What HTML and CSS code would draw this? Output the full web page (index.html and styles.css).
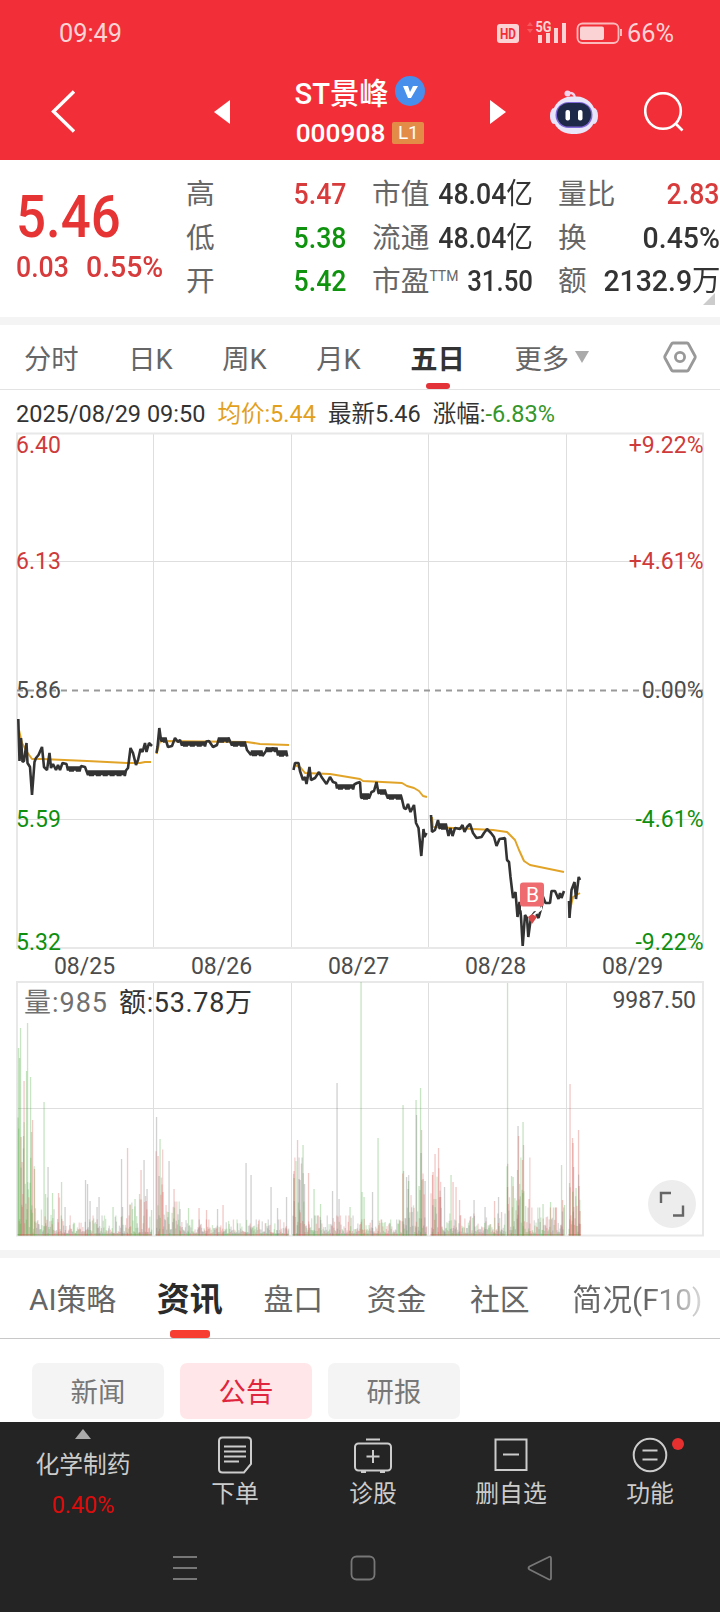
FILE: index.html
```
<!DOCTYPE html>
<html lang="zh-CN">
<head>
  <meta charset="UTF-8" />
  <meta name="viewport" content="width=device-width, initial-scale=1.0"/>
  <title>ST景峰 000908</title>
  <link rel="stylesheet" href="styles.css">
</head>
<body>
  <header class="header">
    <div class="status-bar">
      <span class="time">09:49</span>
      <svg class="signal" width="126" height="28" viewBox="0 0 126 28">
        <rect x="0" y="5" width="22" height="19" rx="3" fill="#fcd3d5"/>
        <text class="hd" x="3" y="20" textLength="16" lengthAdjust="spacingAndGlyphs">HD</text>
        <path d="M30 7l3-4 3 4zM30 10l3 4 3-4z" fill="#f5575d"/>
        <text class="net" x="38.500" y="12.500" textLength="16" lengthAdjust="spacingAndGlyphs">5G</text>
        <path d="M41 16h4v8h-4zM49 14h4v10h-4zM57 9h4v15h-4zM65 4h4v20h-4z" fill="#fcd3d5"/>
        <rect x="80.500" y="4.500" width="41" height="19.500" rx="5" fill="none" stroke="#fcb9bc" stroke-width="1.8"/>
        <rect x="83" y="7.500" width="24" height="13.500" rx="2" fill="#fcd3d5"/>
        <path d="M124 10v7" stroke="#fcb9bc" stroke-width="2"/>
      </svg>
      <span class="battery">66%</span>
    </div>
    <div class="title-bar">
      <svg class="back" width="26" height="44" viewBox="0 0 26 44"><path d="M24 1.500L3.500 21.500l20.500 20" fill="none" stroke="#fff" stroke-width="3.400"/></svg>
      <svg class="prev" width="16" height="24" viewBox="0 0 16 24"><path d="M16 0v24L0 12z" fill="#fff"/></svg>
      <div class="stock">
        <div class="stock-name">ST景峰
          <svg width="30" height="30" viewBox="0 0 30 30"><circle cx="15" cy="15" r="15" fill="#478feb"/><path d="M8 10h5l2 6 3-6h5l-7 12h-3z" fill="#fff"/></svg>
        </div>
        <div class="stock-code">000908 <span class="level">L1</span></div>
      </div>
      <svg class="next" width="16" height="24" viewBox="0 0 16 24"><path d="M0 0v24l16-12z" fill="#fff"/></svg>
      <svg class="robot" width="48" height="44" viewBox="0 0 48 44">
        <path d="M18 3q7-1 7 6" fill="none" stroke="#f3d4ee" stroke-width="2.500"/>
        <circle cx="17.500" cy="3.500" r="3" fill="#f3d4ee"/>
        <ellipse cx="4" cy="26" rx="4" ry="8" fill="#e4e3fb"/>
        <ellipse cx="44" cy="26" rx="4" ry="8" fill="#e4e3fb"/>
        <rect x="2.500" y="6.500" width="43" height="37.500" rx="19" fill="#e9e6fa"/>
        <rect x="5.500" y="12" width="37" height="26" rx="13" fill="#8069d8"/>
        <rect x="7" y="13" width="34" height="23.500" rx="11.500" fill="#1e2848"/>
        <rect x="15.500" y="20" width="4.500" height="10.500" rx="2" fill="#fff"/>
        <rect x="28" y="20" width="4.500" height="10.500" rx="2" fill="#fff"/>
      </svg>
      <svg class="search" width="40" height="40" viewBox="0 0 40 40" fill="none" stroke="#fff" stroke-width="2.600"><circle cx="19" cy="19" r="17.800"/><path d="M31 31l7.500 7.500"/></svg>
    </div>
  </header>

  <section class="quote">
    <div class="price">
      <div class="last"><span class="num">5.46</span></div>
      <div class="change"><span class="num">0.03</span><span class="num percent">0.55%</span></div>
    </div>
    <dl class="stats">
      <div class="stat"><dt>高</dt><dd class="up">5.47</dd></div>
      <div class="stat"><dt>市值</dt><dd>48.04<i>亿</i></dd></div>
      <div class="stat"><dt>量比</dt><dd class="up">2.83</dd></div>
      <div class="stat"><dt>低</dt><dd class="down">5.38</dd></div>
      <div class="stat"><dt>流通</dt><dd>48.04<i>亿</i></dd></div>
      <div class="stat"><dt>换</dt><dd class="wide">0.45%</dd></div>
      <div class="stat"><dt>开</dt><dd class="down">5.42</dd></div>
      <div class="stat"><dt>市盈<sup>TTM</sup></dt><dd class="narrow">31.50</dd></div>
      <div class="stat"><dt>额</dt><dd class="wide">2132.9<i>万</i></dd></div>
    </dl>
    <div class="corner"></div>
  </section>

  <nav class="period-tabs">
    <span>分时</span>
    <span>日K</span>
    <span>周K</span>
    <span>月K</span>
    <span class="active">五日</span>
    <span class="more">更多</span>
    <svg class="gear" width="34" height="34" viewBox="0 0 34 34" fill="none" stroke="#999" stroke-width="2.800"><path d="M10 3h14q1 0 1.500 1l6.500 12q.5 1 0 2l-6.500 12q-.5 1-1.500 1H10q-1 0-1.500-1L2 18q-.5-1 0-2L8.500 4q.5-1 1.500-1z"/><circle cx="17" cy="17" r="4.600"/></svg>
  </nav>

  <div class="legend">
    <span>2025/08/29 09:50</span>
    <span class="avg">均价:5.44</span>
    <span>最新5.46</span>
    <span>涨幅:<b>-6.83%</b></span>
  </div>

  <svg class="chart" width="720" height="818" viewBox="0 432 720 818">
    <g class="grid">
      <path d="M153.500 433v515M291.500 433v515M428.500 433v515M566.500 433v515M17 561.500h686M17 819.500h686"/>
      <path d="M153.500 982v254M291.500 982v254M428.500 982v254M566.500 982v254M17 1108.500h686"/>
    </g>
    <g class="frame">
      <rect x="17" y="433.500" width="686" height="514.500"/>
      <rect x="17" y="982" width="686" height="253.500"/>
    </g>
    <path class="zero" d="M17 690.500h686"/>
    <g id="volume"></g>
    <g id="lines"></g>
    <g class="marker">
      <path class="tip" d="M521 906l11 9 10-9v4l-7 5h-6l-8-5z"/>
      <path d="M528 917l4-3 5 3-5 7z" fill="#d84848"/>
      <rect x="520" y="882.500" width="24" height="24" rx="3"/>
      <text x="532.500" y="902">B</text>
    </g>
    <g class="axis">
      <text class="up" x="16" y="453">6.40</text>
      <text class="up" x="16" y="569">6.13</text>
      <text x="16" y="698">5.86</text>
      <text class="down" x="16" y="827">5.59</text>
      <text class="down" x="16" y="950">5.32</text>
      <g text-anchor="end">
        <text class="up" x="703.500" y="453">+9.22%</text>
        <text class="up" x="703.500" y="569">+4.61%</text>
        <text x="703.500" y="698">0.00%</text>
        <text class="down" x="703.500" y="827">-4.61%</text>
        <text class="down" x="703.500" y="950">-9.22%</text>
        <text x="696" y="1008">9987.50</text>
      </g>
      <g text-anchor="middle">
        <text x="84.500" y="974">08/25</text>
        <text x="221.500" y="974">08/26</text>
        <text x="358.500" y="974">08/27</text>
        <text x="495.500" y="974">08/28</text>
        <text x="632.500" y="974">08/29</text>
      </g>
    </g>
    <text class="vol-text muted" x="24" y="1012" textLength="83">量:985</text>
    <text class="vol-text" x="119" y="1012" textLength="133">额:53.78万</text>
    <g class="expand">
      <circle cx="672" cy="1204" r="24"/>
      <path d="M661 1203v-10h10M673 1215.500h10v-10"/>
    </g>
  </svg>

  <nav class="info-tabs">
    <span>AI策略</span>
    <span class="active">资讯</span>
    <span>盘口</span>
    <span>资金</span>
    <span>社区</span>
    <span class="fade">简况(F10)</span>
  </nav>

  <div class="pills">
    <span class="pill">新闻</span>
    <span class="pill selected">公告</span>
    <span class="pill">研报</span>
  </div>

  <footer class="footer">
    <div class="toolbar">
      <div class="sector">
        <div class="arrow"></div>
        <div class="sector-name">化学制药</div>
        <div class="sector-change">0.40%</div>
      </div>
      <div class="tool">
        <svg width="40" height="40" viewBox="0 0 40 40"><path d="M7.500 2.500h25q3.500 0 3.500 3.500v23l-7 8.500H7.500Q4 37.500 4 34V6q0-3.500 3.500-3.500zM9 11.500h22M9 16.500h22M9 21.500h22M9 26.500h15"/></svg>
        下单
      </div>
      <div class="tool">
        <svg width="40" height="40" viewBox="0 0 40 40"><rect x="2" y="8.500" width="36" height="27" rx="3.500"/><path d="M13 4.500h14M20 15v13M13.500 21.500h13M8 37h5M27 37h5"/></svg>
        诊股
      </div>
      <div class="tool">
        <svg width="40" height="40" viewBox="0 0 40 40"><path d="M4.500 4.500h31v30.500h-31zM12 19.500h16"/></svg>
        删自选
      </div>
      <div class="tool dot">
        <svg width="40" height="40" viewBox="0 0 40 40"><circle cx="20" cy="20" r="16.300"/><path d="M12.500 15.500h15M12.500 24.500h15"/></svg>
        功能
      </div>
    </div>
    <div class="system-nav">
      <svg width="26" height="26" viewBox="0 0 26 26"><path d="M1 2h24M1 13h24M1 24h24"/></svg>
      <svg width="26" height="26" viewBox="0 0 26 26"><rect x="1.500" y="1.500" width="23" height="23" rx="5"/></svg>
      <svg width="26" height="26" viewBox="0 0 26 26"><path d="M22 2L2.500 11.500q-2 1.500 0 3L22 24.500q2 .5 2-1.500V3.500Q24 1 22 2z"/></svg>
    </div>
  </footer>

  <script src="chart.js"></script>
</body>
</html>
```
FILE: styles.css
```
* {
  box-sizing: border-box;
}

body {
  margin: 0;
  width: 720px;
  height: 1612px;
  overflow: hidden;
  background: #fff;
  color: #333;
  font-family: Roboto, "Noto Sans CJK SC", sans-serif;
}

svg {
  display: block;
}

.up { color: #d83b3b; fill: #cf3a3a; }
.down { color: #0f930f; fill: #0f8f0f; }

/* Header */
.header {
  height: 160px;
  background: #f22f38;
  color: #fff;
}

.status-bar {
  height: 64px;
  padding: 2px 46px 0 59px;
  display: flex;
  align-items: center;
  font-size: 25.3px;
  color: #fcd3d5;
}

.signal {
  margin-left: auto;
  margin-right: 4px;
}

.hd, .net {
  font-size: 15px;
  font-weight: bold;
  fill: #f22f38;
}

.net { fill: #fcd3d5; font-size: 14px; }

.title-bar {
  height: 96px;
  padding-left: 50px;
  display: flex;
  align-items: center;
}

.prev { margin-left: 138px; }
.robot { margin-left: 44px; }
.search { margin-left: 46px; }

.stock {
  width: 260px;
}

.stock-name,
.stock-code {
  display: flex;
  align-items: center;
  justify-content: center;
  height: 41px;
  font-size: 29.2px;
  font-weight: 500;
  gap: 7px;
}

.stock-code {
  font-size: 26.3px;
  height: 43px;
}

.level {
  width: 32px;
  height: 22px;
  border-radius: 2px;
  background: #e38c48;
  font-size: 19px;
  font-weight: 400;
  line-height: 22px;
  text-align: center;
}

/* Quote */
.quote {
  position: relative;
  height: 165px;
  border-bottom: 8px solid #f4f4f4;
  display: flex;
}

.price {
  width: 186px;
  padding: 23px 0 0 16px;
  color: #e63434;
}

.num {
  display: inline-block;
  transform: scaleX(0.88);
  transform-origin: left;
}

.last {
  height: 66px;
  line-height: 68px;
  font-size: 60px;
  font-weight: 500;
}

.change {
  display: flex;
  gap: 12px;
  line-height: 36px;
  font-size: 29px;
  color: #d83b3b;
  font-weight: 500;
}

.change .num { transform: scaleX(0.92); }
.change .percent { transform: scaleX(0.98); }

.stats {
  width: 534px;
  margin: 0;
  padding-top: 12px;
  display: grid;
  grid-template-columns: 161px 161px 162px;
  grid-auto-rows: 43.5px;
  column-gap: 25px;
}

.stat {
  display: flex;
  justify-content: space-between;
  line-height: 44px;
  white-space: nowrap;
}

.stat dt {
  font-size: 28.7px;
  color: #666;
}

.stat dd {
  margin: 0;
  font-size: 29px;
  font-weight: 500;
  transform: scaleX(0.92);
  transform-origin: right;
}

.stat .wide { transform: scaleX(0.98); }
.stat .narrow { transform: scaleX(0.89); }

.stat i {
  font-style: normal;
  font-weight: 400;
}

.stat sup {
  font-size: 14px;
  line-height: 1;
  vertical-align: 10px;
}

.corner {
  position: absolute;
  right: 5px;
  bottom: 12px;
  border-left: 12px solid transparent;
  border-bottom: 12px solid #ccc;
}

/* Period tabs */
.period-tabs {
  height: 65px;
  padding-left: 24px;
  border-bottom: 1px solid #e3e3e3;
  display: flex;
  align-items: center;
  gap: 49.6px;
  font-size: 27.3px;
  color: #666;
}

.period-tabs span {
  position: relative;
  white-space: nowrap;
}

.period-tabs .active {
  color: #333;
  font-weight: bold;
}

.active::after {
  content: "";
  position: absolute;
  left: 50%;
  width: 24px;
  height: 6px;
  margin-left: -12px;
  bottom: -12px;
  border-radius: 3px;
  background: #e33338;
}

.period-tabs .more {
  display: flex;
  align-items: center;
  gap: 6px;
}

.more::after {
  content: "";
  border: 7.5px solid transparent;
  border-top: 12px solid #aaa;
  border-bottom: 0;
}

.gear {
  margin-left: auto;
  margin-right: 23px;
}

.legend {
  height: 42px;
  padding: 6px 0 0 16px;
  display: flex;
  gap: 12px;
  font-size: 23.5px;
  line-height: 36px;
  white-space: nowrap;
}

.legend .avg { color: #e2a01c; }
.legend b { font-weight: 400; color: #35962a; }

/* Chart */
.grid path {
  fill: none;
  stroke: #dedede;
}

.frame rect {
  fill: none;
  stroke: #e8e8e8;
  stroke-width: 2;
}

.zero {
  stroke: #999;
  stroke-width: 1.8;
  stroke-dasharray: 6 5;
}

.axis text {
  font-size: 23px;
}

.axis text:not(.up):not(.down) {
  fill: #4c4c4c;
}

.price-line,
.avg-line {
  fill: none;
  stroke: #333;
  stroke-width: 2.6;
}

.avg-line {
  stroke: #e2a428;
  stroke-width: 2;
}

.marker rect { fill: #ee6c70; }
.marker .tip { fill: #fff; }
.marker text {
  font-size: 21px;
  text-anchor: middle;
  fill: #fff;
}

.vol-text {
  font-size: 27px;
  fill: #333;
}

.vol-text.muted { fill: #707070; }

.expand circle { fill: #ededed; }
.expand path {
  fill: none;
  stroke: #666;
  stroke-width: 2.4;
}

/* Info tabs */
.info-tabs {
  height: 89px;
  padding: 0 0 3px 29px;
  border-top: 8px solid #f4f4f4;
  border-bottom: 1px solid #c8c8c8;
  display: flex;
  align-items: center;
  gap: 43.7px;
  font-size: 29.8px;
  color: #666;
  white-space: nowrap;
}

.info-tabs .active {
  position: relative;
  margin: 0 -3px;
  font-size: 33px;
  font-weight: bold;
  color: #2b2b2b;
}

.info-tabs .active::after {
  width: 40px;
  height: 8px;
  margin-left: -20px;
  bottom: -17px;
  background: #f73d31;
}

.fade {
  margin-left: -1px;
  background: linear-gradient(90deg, #666 60%, #ddd 100%);
  -webkit-background-clip: text;
  background-clip: text;
  color: transparent;
}

.pills {
  height: 83px;
  padding: 24px 32px 0;
  display: flex;
  gap: 16px;
}

.pill {
  width: 132px;
  height: 56px;
  border-radius: 7px;
  background: #f4f4f4;
  color: #777;
  font-size: 27.4px;
  line-height: 61px;
  text-align: center;
}

.pill.selected {
  background: #ffe7e9;
  color: #e0263e;
}

/* Footer */
.footer {
  height: 190px;
  background: #242424;
  color: #ccc;
}

.toolbar {
  height: 120px;
  display: grid;
  grid-template-columns: 166px 138px 138px 138px 140px;
  font-size: 23.8px;
  text-align: center;
}

.arrow {
  width: 0;
  margin: 7px auto 0;
  border: 8.5px solid transparent;
  border-top: 0;
  border-bottom: 10px solid #aaa;
}

.sector-name {
  height: 42px;
  line-height: 52px;
}

.sector-change {
  line-height: 49px;
  font-size: 23.4px;
  color: #dc0c0c;
}

.tool {
  position: relative;
  line-height: 39px;
}

.tool svg {
  margin: 13px auto 0;
  fill: none;
  stroke: #ccc;
  stroke-width: 2;
}

.dot::after {
  content: "";
  position: absolute;
  left: 92px;
  top: 16px;
  width: 12px;
  height: 12px;
  border-radius: 50%;
  background: #e63030;
}

.system-nav {
  padding: 13px 167px 0 172px;
  display: flex;
  justify-content: space-between;
}

.system-nav svg {
  fill: none;
  stroke: #777;
  stroke-width: 1.8;
}
```
FILE: chart.js
```
const NS = 'http://www.w3.org/2000/svg';
const BASE = 1235.5;

// flat stretch where the price flips between two ticks: x0, x1, top, bottom
function wiggle(x0, x1, top, bottom) {
  const points = [];
  for (let x = x0, i = 0; x <= x1; x += 1.15, i++) {
    points.push([x, i % 2 ? top - 0.5 : bottom + (i % 3 ? 0.5 : -0.5)]);
  }
  return points;
}

const prices = [
  [
    [18.3, 719], [19.5, 761], [21, 738], [22.5, 762], [24, 761], [26.5, 743], [27.5, 763], [30, 767], [32, 795],
    [34.5, 762], [36, 758], [38.5, 755], [42, 747], [44, 767], [47, 770], [49.5, 753], [51, 768], [53, 764],
    [56, 770], [58, 765], [60, 770], [62.5, 763], [66.5, 764], ...wiggle(68, 80, 767, 771), [81, 766], [85, 767],
    ...wiggle(88, 127, 771, 775.5), [128, 768], [130.5, 748], [133, 753], [136, 765], [138, 760], [140.5, 749],
    [142.5, 752], [145, 743], [146.5, 752], [149, 743], [152, 746]
  ],
  [
    [156.5, 753], [157.5, 747], [159.3, 728], [161, 740], ...wiggle(162, 167, 738, 742), [168, 747], [172, 746],
    [175, 738], [178, 742], [180, 740], ...wiggle(182, 207, 742, 746), [209, 741], [213, 747], [217, 745],
    ...wiggle(218, 229, 738, 742), ...wiggle(232, 246, 742, 746), [247, 750], ...wiggle(251, 263, 751, 755.5),
    ...wiggle(266, 277, 748, 751.5), ...wiggle(278, 288, 751, 756)
  ],
  [
    [293.5, 770], [295, 763], [298.5, 763], [300, 771], [303, 780], [305, 777], [306.5, 784], [309.5, 767], [311, 780],
    [315, 778], [319, 772], [321.5, 777], [326.5, 784], [330, 777], [333, 782], [336, 783],
    ...wiggle(337, 355, 785, 789), [357, 783], [360, 782], [361, 797], ...wiggle(362, 370, 794, 799), [371.5, 792],
    [374, 791], [376.5, 782], [378.5, 793], ...wiggle(379, 386, 790, 794), ...wiggle(388, 402, 795, 799), [404, 808],
    [406, 809], [408, 804], [410.5, 812], [414, 805], [416, 823], [418.5, 828], [421.3, 856], [423.5, 829],
    [424.5, 837], [426.5, 833]
  ],
  [
    [431, 815], [432, 832], [435, 830], [438, 820], [439.5, 828], ...wiggle(440, 446, 824, 829), [448.5, 836],
    [450.5, 828], [452.5, 836], [455, 828], [460, 829], [462.5, 825], [464.5, 832], [467, 827], [470, 824],
    [473, 833], [476.5, 838], [481.5, 837], [484, 833], [487, 829], [491, 833], [494, 837], [496.5, 846],
    [499.5, 839], [505, 838], [507, 860], [509, 862], [510.5, 877], [513, 898], [515.5, 892], [517.5, 917],
    [519.5, 902], [521, 917], [522.7, 946], [525, 915], [527, 918], [528.3, 937], [531, 917], [535, 912],
    [538.5, 918], [541.5, 907], [542.7, 896], [545.5, 903], [550, 903], [551.5, 891], [555, 891], [558.5, 899],
    [560, 893], [561.5, 898], [564, 891]
  ],
  [[569, 901], [569.5, 918], [571.5, 890], [574.5, 882], [576, 899], [578.7, 877], [580, 880]]
];

const averages = [
  [[19, 730], [22, 743], [27, 752], [32, 759], [42, 759], [87, 761], [127, 763], [140, 763], [145, 762], [151, 762]],
  [[156.5, 754], [160, 741], [247, 742], [260, 744], [289, 745]],
  [[295, 765], [301, 768], [305, 773], [330, 774], [360, 779], [363, 781], [402, 783], [407, 786], [414, 788], [419, 791], [423, 796], [427, 797]],
  [[432, 817], [433, 827], [453, 828], [493, 830], [507, 832], [515, 840], [519, 850], [524, 861], [530, 865], [564, 872]],
  [[570, 910], [573, 897], [580, 893]]
];

function drawLine(points, cls) {
  const line = document.createElementNS(NS, 'polyline');
  line.setAttribute('points', points.join(' '));
  line.setAttribute('class', cls);
  line.setAttribute('stroke-linejoin', 'bevel');
  document.getElementById('lines').appendChild(line);
}

averages.forEach(points => drawLine(points, 'avg-line'));
prices.forEach(points => drawLine(points, 'price-line'));

// tall volume bars: x, top, g/r/k
const spikes = `18.5 1048 g,19.5 1058 g,20.5 1028 g,21 1137 r,22 1162 r,24 1081 r,23.5 1136 g,26.5 1071 g,27.5 1023 g,30.5 1077 g,
31.5 1132 g,32.5 1120 r,34.5 1169 r,44 1102 g,45.5 1194 g,48 1167 k,52.5 1193 g,58.5 1193 r,61.5 1182 g,65 1207 k,
85.5 1180 k,87.5 1184 k,90 1201 k,97 1207 k,99 1197 k,113 1207 g,121.5 1159 k,122.5 1207 k,127.5 1148 r,130 1205 r,135 1199 g,139.5 1194 g,
141 1170 r,144 1160 k,145.5 1196 r,147 1189 k,151.5 1210 g,156.5 1117 k,158 1156 r,160 1139 g,159 1176 k,163 1192 r,169 1161 k,
174 1189 r,180 1209 k,188.5 1208 g,199 1208 r,206.5 1210 r,217.5 1209 k,223 1205 r,246 1163 k,251 1175 k,271 1187 k,
277.5 1208 k,286.5 1197 k,294 1171 r,294 1178 g,297.5 1140 r,303 1145 g,299 1179 k,300 1180 k,304.5 1184 k,308.5 1173 r,314 1189 g,
320.5 1204 g,332.5 1191 k,337 1083 k,339 1199 k,350 1207 g,361 982 g,362 1192 g,364 1197 g,372.5 1192 k,378 1138 g,
403 1105 g,403.5 1171 g,406.5 1177 k,408.5 1181 g,416 1100 g,416.5 1115 k,420.5 1088 g,421.5 1130 r,421 1153 k,
423 1179 r,425 1181 k,419 1186 g,432.5 1175 r,433 1172 r,435 1154 r,438.5 1148 r,440.5 1197 r,444.5 1187 k,451 1175 g,
453 1182 r,456 1187 r,459.5 1200 r,474 1200 k,485 1207 k,494.5 1201 r,498.5 1197 k,501.5 1212 r,507.5 983 g,
507.5 1187 r,511.5 1176 g,513 1177 g,517.5 1170 g,518 1126 k,518.5 1136 r,523 1122 g,523.5 1145 r,522.5 1160 r,
529 1199 r,543 1204 g,550.5 1202 g,561.5 1165 g,562.5 1200 r,564.5 1205 g,570 1084 r,569.5 1183 g,572.5 1138 r,
573 1143 r,573.5 1167 r,576 1188 g,578.5 1130 r,579 1186 r,580 1211 r`;

const colors = { g: '#46a637', r: '#d04c46', k: '#666' };

function drawBar(x, top, color, opacity) {
  const bar = document.createElementNS(NS, 'rect');
  bar.setAttribute('x', x - 0.6);
  bar.setAttribute('y', top);
  bar.setAttribute('width', 1.3);
  bar.setAttribute('height', BASE - top);
  bar.setAttribute('fill', colors[color]);
  bar.setAttribute('opacity', opacity);
  document.getElementById('volume').appendChild(bar);
}

spikes.split(',').forEach(item => {
  const [x, top, color] = item.trim().split(' ');
  drawBar(+x, +top, color, 0.3);
});

let seed = 908;
function random() {
  seed = (seed * 16807) % 2147483647;
  return seed / 2147483647;
}

// sessions and the busy minutes inside them: from, to, average height
const sessions = [
  [18, 36, 58], [36, 60, 18], [60, 130, 9], [130, 152, 17],
  [156, 163, 42], [163, 180, 16], [180, 289, 7],
  [293, 305, 38], [305, 360, 9], [360, 366, 18], [366, 402, 7], [402, 427, 30],
  [431, 442, 38], [442, 506, 10], [507, 530, 38], [530, 564, 13],
  [569, 581, 45]
];

sessions.forEach(([from, to, size]) => {
  // the opening of the first day is mostly selling
  const mix = from === 18 ? 'gggr' : 'grk';
  for (let x = from; x < to; x += 0.6) {
    const height = 2 + Math.min(-Math.log(random()) * size * 0.75, size * 2);
    drawBar(x, BASE - height, mix[Math.floor(random() * mix.length)], 0.25);
  }
  // the quiet minutes add up to a solid strip along the bottom
  for (let x = from; x < to; x += 1) {
    drawBar(x, BASE - 1.5, 'gr'[Math.floor(random() * 2)], 0.35);
  }
});
```
